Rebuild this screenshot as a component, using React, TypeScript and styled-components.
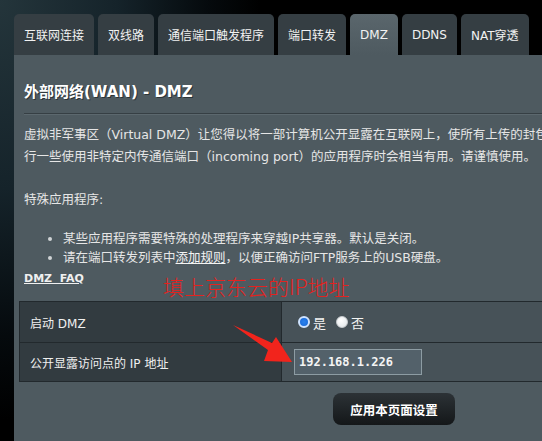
import React from "react";
import styled, { createGlobalStyle } from "styled-components";

const GlobalStyle = createGlobalStyle`
  html, body { margin: 0; padding: 0; }
  body {
    width: 542px;
    height: 441px;
    overflow: hidden;
    background: radial-gradient(ellipse 260px 420px at 0 0, #24353b 0%, #15232a 45%, #050a0d 80%, #000 100%), #000;
    font-family: "DejaVu Sans", "Noto Sans CJK SC", sans-serif;
    color: #ececec;
  }
`;

const Page = styled.div`
  position: relative;
  width: 542px;
  height: 441px;
  padding: 14px 0 0 14px;
  box-sizing: border-box;
  overflow: hidden;
`;

const TabBar = styled.div`
  display: flex;
  gap: 4px;
  height: 41px;
`;

const Tab = styled.div<{ $active?: boolean }>`
  display: flex;
  align-items: center;
  padding: 0 10px;
  border-radius: 5px 5px 0 0;
  font-size: 12px;
  white-space: nowrap;
  color: #f2f2f2;
  background: ${(p) => (p.$active ? "linear-gradient(#5a666c, #4e5a60)" : "#353e43")};
`;

const Panel = styled.div`
  width: 760px;
  height: 386px;
  padding: 0 10px;
  box-sizing: border-box;
  background: #4e5a60;
`;

const Title = styled.div`
  padding: 26px 0 10px;
  font-size: 15px;
  font-weight: bold;
  line-height: 22px;
  color: #ffffff;
  text-shadow: 1px 1px 0 #2c3438;
  border-bottom: 1px solid #363f44;
  box-shadow: 0 1px 0 #5c686e;
`;

const Desc = styled.p`
  margin: 10px 0 0;
  font-size: 12.5px;
  line-height: 22px;
  white-space: nowrap;
  color: #e6e6e6;
`;

const SubHead = styled.div`
  margin-top: 21px;
  font-size: 12.5px;
  line-height: 22px;
  color: #e6e6e6;
`;

const List = styled.ul`
  margin: 18px 0 0;
  padding: 0;
  list-style: none;
`;

const Item = styled.li`
  display: flex;
  align-items: center;
  padding-left: 24px;
  font-size: 12.5px;
  line-height: 19px;
  white-space: nowrap;
  color: #e6e6e6;
  &::before {
    content: "";
    width: 4px;
    height: 4px;
    margin-right: 11px;
    border-radius: 50%;
    background: #d0d4d6;
  }
`;

const InlineLink = styled.span`
  text-decoration: underline;
  color: #f4f4f4;
`;

const Faq = styled.div`
  margin-top: 4px;
  font-size: 11px;
  font-weight: bold;
  line-height: 16px;
  text-decoration: underline;
  white-space: pre;
  color: #f0f0f0;
`;

const Table = styled.div`
  margin: 14px -5px 0;
  border: 1px solid #22292d;
`;

const Row = styled.div<{ $h: number; $first?: boolean }>`
  display: grid;
  grid-template-columns: 261px 1fr;
  height: ${(p) => p.$h}px;
  border-top: ${(p) => (p.$first ? "none" : "1px solid #22292d")};
`;

const Label = styled.div`
  display: flex;
  align-items: center;
  padding-left: 10px;
  background: #323b40;
  font-size: 12px;
  color: #f0f0f0;
  white-space: nowrap;
`;

const Value = styled.div`
  display: flex;
  align-items: center;
  padding-left: 12px;
  background: #475258;
  border-left: 1px solid #22292d;
  font-size: 13px;
  color: #f4f4f4;
`;

const RadioDot = styled.span<{ $on?: boolean }>`
  width: 12px;
  height: 12px;
  box-sizing: border-box;
  border-radius: 50%;
  margin: 0 3px 0 4px;
  border: ${(p) => (p.$on ? "2px solid #cfe3ff" : "1px solid #c9cdd0")};
  background: ${(p) =>
    p.$on ? "radial-gradient(circle, #2a82ee 0%, #1565d6 100%)" : "radial-gradient(circle at 40% 35%, #ffffff 0%, #e9ecee 70%, #c8ccd0 100%)"};
`;

const RadioGroup = styled.label`
  display: flex;
  align-items: center;
  margin-right: 6px;
`;

const IpInput = styled.div`
  display: flex;
  align-items: center;
  width: 128px;
  height: 26px;
  box-sizing: border-box;
  padding-left: 4px;
  background: #53616a;
  border: 1px solid #8d9ca3;
  font-family: "DejaVu Sans Mono", "Liberation Mono", monospace;
  font-size: 12px;
  font-weight: bold;
  color: #f4f4f4;
`;

const ButtonBar = styled.div`
  display: flex;
  justify-content: center;
  margin-top: 11px;
`;

const ApplyButton = styled.button`
  width: 122px;
  height: 32px;
  border: none;
  border-radius: 8px;
  background: linear-gradient(#2c3236, #141719);
  color: #ffffff;
  font-family: "Noto Sans CJK SC", sans-serif;
  font-size: 12.5px;
  font-weight: bold;
`;

const Note = styled.div`
  position: absolute;
  left: 163px;
  top: 272px;
  font-family: "Noto Sans CJK SC", sans-serif;
  font-size: 21px;
  font-weight: 300;
  line-height: 28px;
  color: #e3231f;
  white-space: nowrap;
`;

const ArrowLayer = styled.svg`
  position: absolute;
  left: 0;
  top: 0;
  pointer-events: none;
`;

export default function App() {
  return (
    <>
      <GlobalStyle />
      <Page>
        <TabBar>
          <Tab>互联网连接</Tab>
          <Tab>双线路</Tab>
          <Tab>通信端口触发程序</Tab>
          <Tab>端口转发</Tab>
          <Tab $active>DMZ</Tab>
          <Tab>DDNS</Tab>
          <Tab>NAT穿透</Tab>
        </TabBar>
        <Panel>
          <Title>外部网络(WAN) - DMZ</Title>
          <Desc>
            虚拟非军事区（Virtual DMZ）让您得以将一部计算机公开显露在互联网上，使所有上传的封包都转向您设置的计算机。当您执
            <br />
            行一些使用非特定内传通信端口（incoming port）的应用程序时会相当有用。请谨慎使用。
          </Desc>
          <SubHead>特殊应用程序:</SubHead>
          <List>
            <Item>某些应用程序需要特殊的处理程序来穿越IP共享器。默认是关闭。</Item>
            <Item>
              请在端口转发列表中<InlineLink>添加规则</InlineLink>，以便正确访问FTP服务上的USB硬盘。
            </Item>
          </List>
          <Faq>{"DMZ  FAQ"}</Faq>
          <Table>
            <Row $h={40} $first>
              <Label>启动 DMZ</Label>
              <Value>
                <RadioGroup>
                  <RadioDot $on />是
                </RadioGroup>
                <RadioGroup>
                  <RadioDot />否
                </RadioGroup>
              </Value>
            </Row>
            <Row $h={38}>
              <Label>公开显露访问点的 IP 地址</Label>
              <Value>
                <IpInput>192.168.1.226</IpInput>
              </Value>
            </Row>
          </Table>
          <ButtonBar>
            <ApplyButton>应用本页面设置</ApplyButton>
          </ButtonBar>
        </Panel>
        <Note>填上京东云的IP地址</Note>
        <ArrowLayer width="542" height="441" viewBox="0 0 542 441">
          <polygon
            points="233,325 272,343 276,337 292,362 264,361 268,350"
            fill="#f2241c"
          />
        </ArrowLayer>
      </Page>
    </>
  );
}
